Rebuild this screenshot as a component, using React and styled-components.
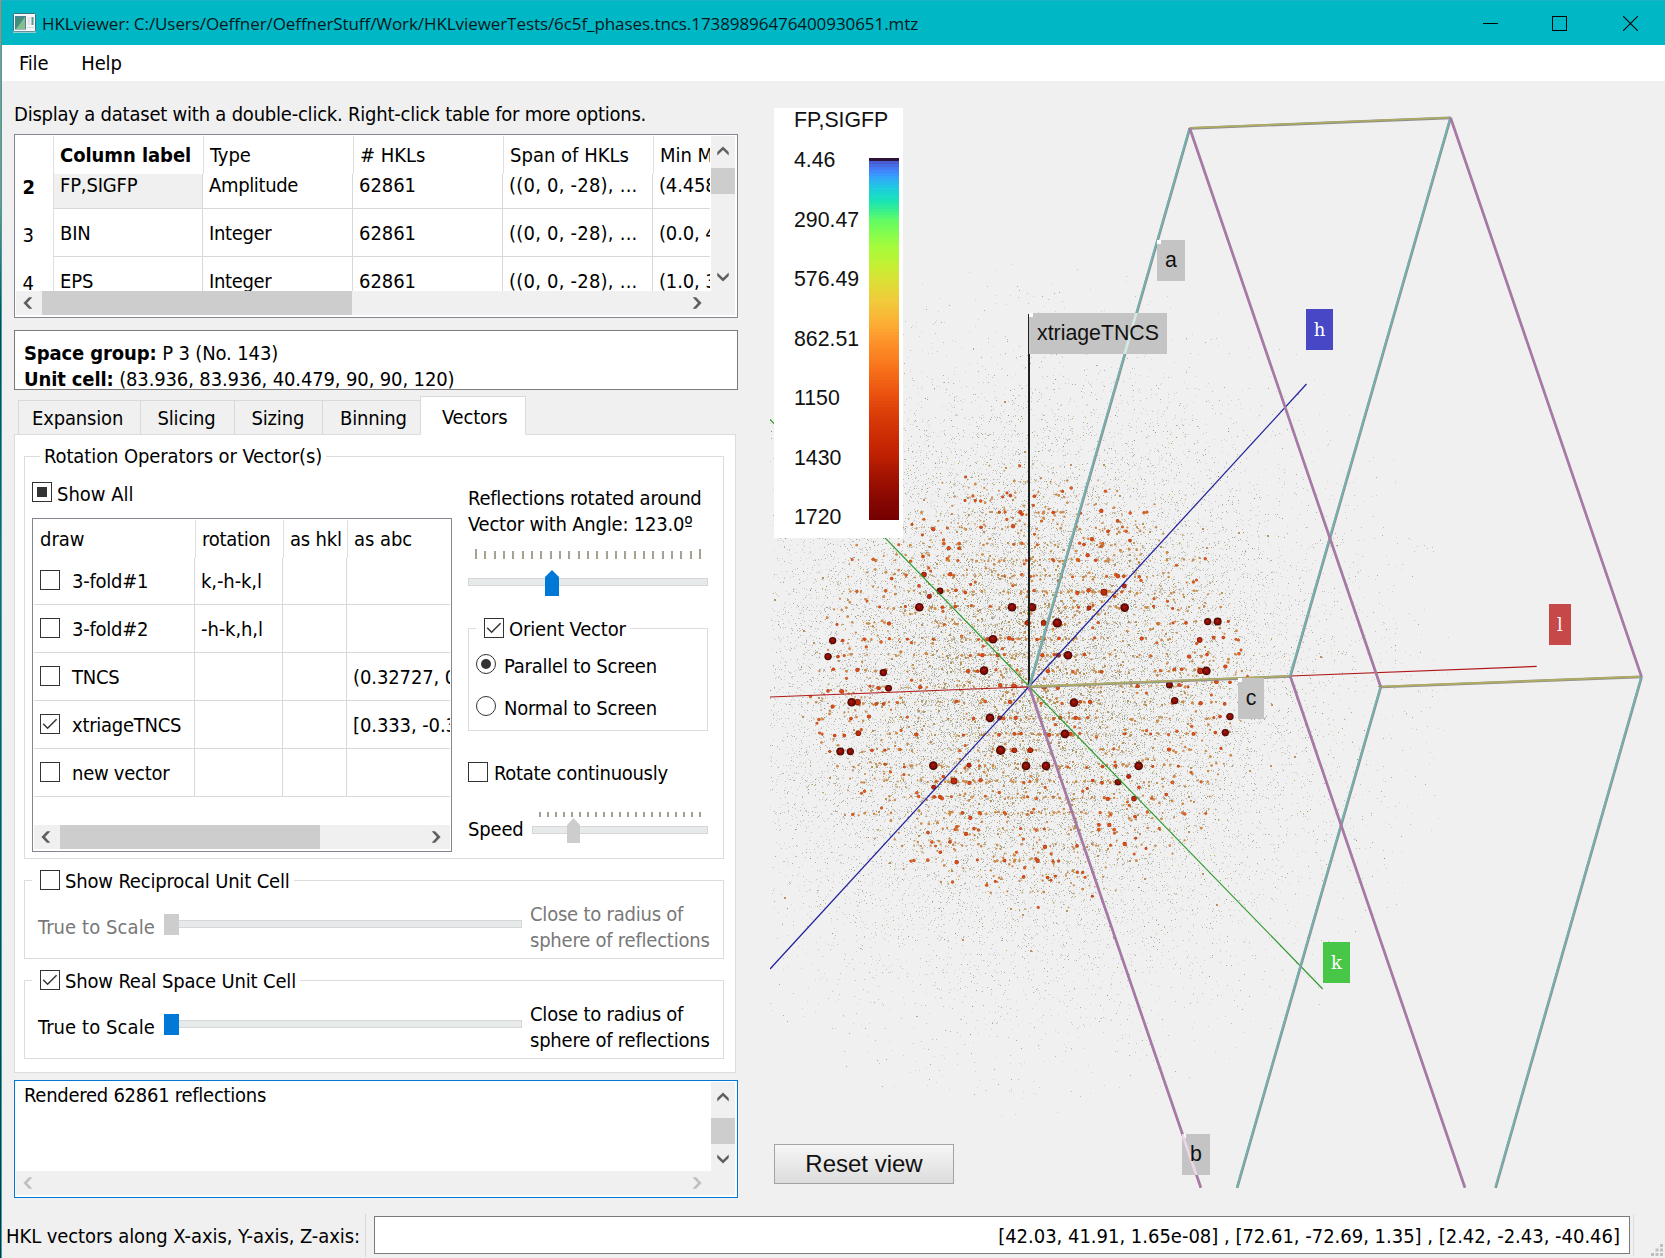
import React from "react";
import styled, { createGlobalStyle, css } from "styled-components";

const UI_FONT = '"DejaVu Sans Condensed", "DejaVu Sans", sans-serif';
const WEB_FONT = '"Liberation Sans", Arial, sans-serif';

const GlobalStyle = createGlobalStyle`
  *, *::before, *::after { box-sizing: border-box; }
  body { margin: 0; background: #f0f0f0; }
`;

/* ---------- window frame ---------- */

const Desktop = styled.div`
  width: 1665px;
  height: 1258px;
  padding-left: 1px;
  background: linear-gradient(#b58a6c 0, #a98468 200px, #1c3a44 330px, #4a5a60 560px, #16282e 1258px);
  overflow: hidden;
`;

const Window = styled.div`
  height: 100%;
  display: flex;
  flex-direction: column;
  border-left: 1px solid #12b0bf;
  background: #f0f0f0;
  color: #000;
  font: 20px/24px ${UI_FONT};
  letter-spacing: -0.17px;
  white-space: nowrap;
`;

const TitleBar = styled.header`
  height: 45px;
  flex: none;
  display: flex;
  align-items: center;
  padding: 0 27px 0 11px;
  border-top: 1px solid #1bb4c6;
  background: #00b7c6;
`;

const Title = styled.h1`
  flex: 1;
  margin: 2px 0 0 6px;
  font: 400 17px/24px "Open Sans", "Noto Sans", sans-serif;
  letter-spacing: -0.075px;
  color: #06181a;
`;

const WindowControls = styled.div`
  display: grid;
  grid-template-columns: 69px 71px 15px;
`;

const MenuBar = styled.nav`
  height: 36px;
  flex: none;
  display: flex;
  gap: 33px;
  padding: 6px 0 0 17px;
  background: #fff;
`;

const Main = styled.main`
  flex: 1;
  min-height: 0;
  display: flex;
  gap: 32px;
`;

const Controls = styled.section`
  width: 736px;
  flex: none;
  padding: 21px 0 0 12px;
  display: flex;
  flex-direction: column;
`;

const Hint = styled.p`
  margin: 0 0 8px;
  letter-spacing: -0.22px;
`;

/* ---------- scroll bars ---------- */

const Bar = styled.div`
  flex: none;
  display: flex;
  flex-direction: ${(p) => (p.$vertical ? "column" : "row")};
  ${(p) => (p.$vertical ? "width: 24px;" : "height: 24px;")}
  background: #f0f0f0;
`;

const BarButton = styled.span`
  flex: none;
  display: flex;
  align-items: center;
  justify-content: center;
  ${(p) => (p.$vertical ? "height: 29px;" : "width: 26px; padding-right: 2px;")}
`;

const BarTrack = styled.div`
  flex: 1;
  ${(p) => (p.$vertical ? `padding-top: ${p.$start}px;` : `padding-left: ${p.$start}px;`)}
`;

const BarThumb = styled.div`
  background: #cdcdcd;
  ${(p) => (p.$vertical ? `height: ${p.$size}px; width: 100%;` : `width: ${p.$size}px; height: 100%;`)}
`;

const Corner = styled.div`
  background: #f0f0f0;
`;

const arrows = {
  up: "M0.3 9.4V5.9L6 0.4L11.7 5.9V9.4L6 4.1Z",
  down: "M0.3 0.6V4.1L6 9.6L11.7 4.1V0.6L6 5.9Z",
  left: "M9.4 0.3H5.9L0.4 6L5.9 11.7H9.4L4.1 6Z",
  right: "M0.6 0.3H4.1L9.6 6L4.1 11.7H0.6L5.9 6Z",
};

function Arrow({ dir, muted }) {
  const vertical = dir === "up" || dir === "down";
  return (
    <svg width={vertical ? 12 : 10} height={vertical ? 10 : 12}>
      <path d={arrows[dir]} fill={muted ? "#bfbfbf" : "#5f5f5f"} />
    </svg>
  );
}

function ScrollBar({ vertical, start = 0, size, muted }) {
  return (
    <Bar $vertical={vertical}>
      <BarButton $vertical={vertical}><Arrow dir={vertical ? "up" : "left"} muted={muted} /></BarButton>
      <BarTrack $vertical={vertical} $start={start}>
        {size ? <BarThumb $vertical={vertical} $size={size} /> : null}
      </BarTrack>
      <BarButton $vertical={vertical}><Arrow dir={vertical ? "down" : "right"} muted={muted} /></BarButton>
    </Bar>
  );
}

/* ---------- frames and tables ---------- */

const Frame = styled.div`
  flex: none;
  border: 1px solid ${(p) => p.$border || "#828790"};
  background: #fff;
  height: ${(p) => p.$height}px;
  overflow: hidden;
`;

const ScrollGrid = styled.div`
  display: grid;
  grid-template-columns: 695px 24px;
  grid-template-rows: ${(p) => p.$view}px 24px;
  padding: 1px;
`;

const Viewport = styled.div`
  overflow: hidden;
  margin-right: 1px;
`;

const HeaderRow = styled.div`
  display: grid;
  grid-template-columns: ${(p) => p.$columns};
  height: 38px;
`;

const HeaderCell = styled.div`
  padding: 7px 0 0 6px;
  border-right: ${(p) => (p.$open ? "none" : "1px solid #e0e0e0")};
  font-weight: ${(p) => (p.$bold ? 700 : 400)};
  letter-spacing: ${(p) => p.$ls || "-0.05px"};
  overflow: hidden;
`;

const BodyRow = styled.div`
  display: grid;
  grid-template-columns: ${(p) => p.$columns};
  height: ${(p) => p.$height || 48}px;
`;

const cellBase = css`
  display: flex;
  align-items: flex-end;
  overflow: hidden;
`;

const Cell = styled.div`
  ${cellBase}
  padding: 0 0 11px 6px;
  border-right: ${(p) => (p.$open ? "none" : "1px solid #d8d8d8")};
  border-bottom: 1px solid #d8d8d8;
  background: ${(p) => (p.$current ? "#f0f0f0" : "#fff")};
  letter-spacing: ${(p) => p.$ls || "-0.1px"};
`;

const RowNumber = styled.div`
  ${cellBase}
  padding: 0 0 10px 6.5px;
  border-right: 1px solid #e0e0e0;
  font-weight: ${(p) => (p.$bold ? 700 : 400)};
`;

const InfoBox = styled(Frame)`
  margin-top: 12px;
  padding: 9px 0 0 9px;
  line-height: 26px;
  letter-spacing: -0.13px;
`;

/* ---------- tabs ---------- */

const Tabs = styled.div`
  flex: none;
  display: flex;
  align-items: flex-end;
  height: 39px;
  margin: 6px 0 -1px 4px;
`;

const Tab = styled.div`
  width: ${(p) => p.$width}px;
  height: ${(p) => (p.$active ? 39 : 35)}px;
  padding: ${(p) => (p.$active ? 8 : 5)}px 0 0 ${(p) => p.$pad}px;
  border: 1px solid #d9d9d9;
  border-right-width: ${(p) => (p.$active ? 1 : 0)}px;
  ${(p) => p.$active && "border-bottom-color: #fff; z-index: 1;"}
  background: ${(p) => (p.$active ? "#fff" : "#f0f0f0")};
`;

const Pane = styled.div`
  width: 722px;
  height: 639px;
  flex: none;
  padding: 21px 11px 0 9px;
  border: 1px solid #dcdcdc;
  background: #fff;
`;

const Group = styled.fieldset`
  display: block;
  margin: 0 0 ${(p) => p.$gap || 0}px;
  padding: 0;
  min-width: 0;
  height: ${(p) => p.$height}px;
  border: 1px solid #dcdcdc;
`;

const GroupTitle = styled.div`
  width: fit-content;
  margin: -13px 0 0 ${(p) => p.$left}px;
  padding: 0 4px 0 ${(p) => p.$pad}px;
  background: #fff;
  letter-spacing: ${(p) => p.$ls || "-0.17px"};
`;

const Columns = styled.div`
  display: flex;
  gap: 16px;
  padding-left: 7px;
`;

const OperatorsColumn = styled.div`
  width: 420px;
  padding-top: 12px;
`;

const OperatorsTable = styled(Frame)`
  margin-top: 14px;
  padding: 1px 1px 0;
`;

const OperatorsBody = styled.div`
  height: 305px;
`;

const RotationColumn = styled.div`
  width: 240px;
  padding-top: 17px;
`;

const SpacedSlider = styled.div`
  padding: 12px 0 32px;
`;

const RadioList = styled.div`
  display: flex;
  flex-direction: column;
  gap: 18px;
  padding: 12px 0 0 7px;
`;

/* ---------- check boxes, radios, sliders ---------- */

const Option = styled.label`
  display: flex;
  height: 24px;
  margin-top: ${(p) => p.$top || 0}px;
`;

const OptionText = styled.span`
  margin: ${(p) => p.$drop || 1}px 0 0 ${(p) => p.$left || 5}px;
  letter-spacing: ${(p) => p.$ls || "-0.17px"};
`;

const Box = styled.span`
  flex: none;
  display: flex;
  align-items: center;
  justify-content: center;
  width: 20px;
  height: 20px;
  margin-top: 2px;
  border: 1px solid #333;
  background: #fff;
`;

const Partial = styled.span`
  width: 10px;
  height: 10px;
  background: #333;
`;

const Radio = styled(Box)`
  border-radius: 50%;
`;

const RadioDot = styled(Partial)`
  border-radius: 50%;
`;

const TableCheck = styled.span`
  display: flex;
  margin: 0 12px 0 0;
  align-self: flex-end;
  padding-bottom: 3px;
`;

function CheckBox({ state }) {
  return (
    <Box>
      {state === "on" && (
        <svg width="16" height="12" viewBox="0 0 16 12">
          <path d="M1.2 5.8L5.6 10.2L14.6 1.2" fill="none" stroke="#333" strokeWidth="1.5" />
        </svg>
      )}
      {state === "partial" && <Partial />}
    </Box>
  );
}

const Paragraph = styled.p`
  margin: 0;
  line-height: 26px;
  letter-spacing: ${(p) => p.$ls};
`;

const SliderBox = styled.div`
  width: ${(p) => p.$width}px;
`;

const Ticks = styled.div`
  display: flex;
  justify-content: space-between;
  align-items: flex-end;
  height: ${(p) => p.$height}px;
  margin: 0 7px;
`;

const Tick = styled.i`
  width: 2px;
  height: ${(p) => p.$height}px;
  background: #a5a193;
`;

const Rail = styled.div`
  position: relative;
  height: ${(p) => p.$height}px;
  margin-top: ${(p) => p.$top}px;
  padding-top: ${(p) => p.$groove}px;
`;

const Groove = styled.div`
  width: 100%;
  height: 8px;
  border: 1px solid #d6d6d6;
  background: #e7eaea;
`;

const Thumb = styled.div`
  position: absolute;
  top: 0;
  left: ${(p) => p.$left}px;
  width: ${(p) => p.$width}px;
  height: 100%;
  background: ${(p) => (p.$on ? "#0078d7" : "#cdcdcd")};
  ${(p) => p.$pointed && "clip-path: polygon(50% 0, 100% 7px, 100% 100%, 0 100%, 0 7px);"}
`;

function Slider({ width, count, ends, tickHeight, gap, height, left, thumb, on }) {
  return (
    <SliderBox $width={width}>
      <Ticks $height={ends}>
        {Array.from({ length: count }, (_, i) => (
          <Tick key={i} $height={i === 0 || i === count - 1 ? ends : tickHeight} />
        ))}
      </Ticks>
      <Rail $height={height} $top={gap} $groove={8}>
        <Groove />
        <Thumb $left={left} $width={thumb} $on={on} $pointed />
      </Rail>
    </SliderBox>
  );
}

const SpeedRow = styled.div`
  display: flex;
  margin-top: 28px;
`;

const SpeedLabel = styled.span`
  width: 64px;
  padding-top: 5px;
`;

const ScaleRow = styled.div`
  display: flex;
  align-items: center;
  padding: 9px 0 0 13px;
  color: ${(p) => (p.$off ? "#787878" : "#000")};
`;

const ScaleLabel = styled.span`
  width: 126px;
  letter-spacing: 0.08px;
`;

const ScaleRail = styled(Rail)`
  width: 358px;
  margin: 0 8px 5px 0;
`;

function UnitCellGroup({ title, on, gap }) {
  return (
    <Group $height={79} $gap={gap}>
      <GroupTitle $left={7} $pad={8}>
        <Option>
          <CheckBox state={on ? "on" : "off"} />
          <OptionText>{title}</OptionText>
        </Option>
      </GroupTitle>
      <ScaleRow $off={!on}>
        <ScaleLabel>True to Scale</ScaleLabel>
        <ScaleRail $height={21} $top={0} $groove={6}>
          <Groove />
          <Thumb $left={0} $width={15} $on={on} />
        </ScaleRail>
        <Paragraph $ls="-0.22px">Close to radius of<br />sphere of reflections</Paragraph>
      </ScaleRow>
    </Group>
  );
}

/* ---------- log and status ---------- */

const Log = styled(Frame)`
  margin-top: 7px;
`;

const LogText = styled.div`
  padding: 1px 0 0 8px;
  letter-spacing: -0.26px;
`;

const StatusBar = styled.footer`
  height: 50px;
  flex: none;
  display: flex;
  padding-left: 4px;
`;

const StatusLabel = styled.span`
  width: 360px;
  height: 43px;
  margin-top: 6px;
  padding-top: 10px;
  border-right: 1px solid #d7d7d7;
  letter-spacing: -0.08px;
`;

const StatusField = styled.div`
  width: 1256px;
  height: 38px;
  margin: 8px 0 0 8px;
  padding: 7px 9px 0 0;
  border: 1px solid #7a7a7a;
  background: #fff;
  text-align: right;
  letter-spacing: -0.01px;
`;

const GripCell = styled.div`
  flex: 1;
  display: flex;
  align-items: flex-end;
  justify-content: flex-end;
  margin: 6px 2px 2px 3px;
  border-left: 1px solid #dedede;
`;

/* ---------- 3D scene ---------- */

const Scene = styled.section`
  position: relative;
  width: 895px;
  height: 1127px;
`;

const Legend = styled.div`
  position: absolute;
  left: 4px;
  top: 27px;
  width: 129px;
  height: 430px;
  padding: 0 4px 0 20px;
  background: #fff;
  font: 21.3px/24px ${WEB_FONT};
  letter-spacing: 0;
  color: #111;
`;

const LegendScale = styled.div`
  display: flex;
  justify-content: space-between;
  padding-top: 16px;
`;

const LegendValues = styled.div`
  display: flex;
  flex-direction: column;
  gap: 35.5px;
`;

const ColourBar = styled.div`
  width: 30px;
  height: 362px;
  margin-top: 10px;
  background: ${(p) => p.$stops};
`;

const ResetButton = styled.button`
  position: absolute;
  left: 4px;
  top: 1063px;
  width: 180px;
  height: 40px;
  padding: 0;
  border: 1px solid #a3a3a3;
  background: linear-gradient(#f6f6f6, #dcdcdc);
  font: 24px/36px ${WEB_FONT};
  color: #111;
`;

const turbo = [
  [0.008, 72, 92, 208], [0.03, 66, 130, 252], [0.05, 50, 165, 248], [0.08, 28, 205, 222], [0.115, 26, 228, 182],
  [0.145, 62, 242, 135], [0.17, 100, 252, 98], [0.24, 164, 252, 59], [0.3, 200, 238, 50], [0.345, 224, 220, 55],
  [0.39, 240, 203, 58], [0.45, 252, 176, 52], [0.5, 254, 148, 43], [0.57, 248, 118, 28], [0.64, 237, 85, 16],
  [0.7, 220, 62, 8], [0.76, 206, 45, 4], [0.82, 190, 32, 2], [0.88, 160, 18, 1], [0.94, 136, 8, 2], [1, 115, 0, 2],
];

function colourAt(t) {
  let i = 1;
  while (i < turbo.length - 1 && turbo[i][0] < t) i += 1;
  const [a, b] = [turbo[i - 1], turbo[i]];
  const k = Math.max(0, Math.min(1, (t - a[0]) / (b[0] - a[0])));
  return `rgb(${[1, 2, 3].map((c) => Math.round(a[c] + (b[c] - a[c]) * k)).join(",")})`;
}

const barStops = `linear-gradient(#2d1238 0 3px, ${Array.from({ length: 120 }, (_, i) => {
  const y = 3 + i * 3;
  return `${colourAt(y / 362)} ${y}px ${y + 3}px`;
}).join(", ")})`;

const legendValues = ["4.46", "290.47", "576.49", "862.51", "1150", "1430", "1720"];

const CX = 1029;
const CY = 686.6;
const ROW = 15.83;

function randomSource(seed) {
  let s = seed;
  return () => {
    s = (s + 0x6d2b79f5) | 0;
    let t = Math.imul(s ^ (s >>> 15), 1 | s);
    t = (t + Math.imul(t ^ (t >>> 7), 61 | t)) ^ t;
    return ((t ^ (t >>> 14)) >>> 0) / 4294967296;
  };
}

function speckle(seed, count, sigma, size, snap) {
  const rnd = randomSource(seed);
  let d = "";
  for (let i = 0; i < count; i += 1) {
    const r = sigma * Math.sqrt(-2 * Math.log(1 - rnd()));
    const a = rnd() * Math.PI * 2;
    const x = r * Math.cos(a);
    let y = r * Math.sin(a);
    if (rnd() < snap) y = Math.round(y / ROW) * ROW + (rnd() - 0.5) * 6;
    const px = Math.round(CX + x);
    const py = Math.round(CY + y);
    if (px >= 770 && r < 430) d += `M${px} ${py}h${size}v${size}h-${size}z`;
  }
  return d;
}

const speckles = [
  ["#d3d3d1", speckle(11, 16000, 142, 1, 0.05)],
  ["#c2c2bc", speckle(12, 10500, 134, 1, 0.1)],
  ["#aeae98", speckle(13, 7200, 122, 1, 0.15)],
  ["#94946f", speckle(14, 1300, 105, 1, 0.25)],
  ["#cfa53c", speckle(15, 800, 96, 1, 0.3)],
  ["#b8935c", speckle(16, 420, 96, 2, 0.3)],
];

/* reflections come in pairs related by inversion through the origin */
const smallSpheres = (() => {
  const rnd = randomSource(77);
  const out = [];
  while (out.length < 1800) {
    const x = (rnd() * 2 - 1) * 222;
    let y = -rnd() * 222;
    const r = Math.hypot(x, y);
    if (r > 222 || rnd() < Math.max(0, (r - 165) / 75)) continue;
    if (Math.abs(Math.abs(x) - 105) < 30 && y > -60 && rnd() < 0.6) continue;
    if (rnd() < (r < 150 ? 0.65 : 0.35)) y = Math.round(y / ROW) * ROW + (rnd() - 0.5) * 2.5;
    const size = 0.85 + rnd() * rnd() * 1.1;
    out.push([CX + x, CY + y, size], [CX - x, CY - y, size]);
  }
  return out;
})();

/* offsets from the centre in thirds of a pixel, with radius; each has an inverse mate */
const largeSpheres = [
  [-329, -238, 13], [-51, -238, 13], [9, -238, 13], [287, -237, 13], [85, -191, 14], [-108, -142, 13], [117, -94, 13],
  [-135, -48, 13], [532, -47, 13], [-589, -138, 11], [-603, -90, 11], [-437, -42, 11], [-421, 5, 10], [-267, -287, 10],
  [536, -195, 11], [566, -195, 12],
];

const mediumSpheres = [
  [225, -283, 10], [-315, -336, 8], [-236, -337, 6], [-299, -270, 7], [512, -140, 8], [-4, -191, 8], [44, -191, 8],
  [-94, -94, 6], [180, -236, 7], [286, -302, 7], [422, -5, 9], [267, -331, 6], [284, -331, 5], [176, -394, 6],
  [165, -426, 5], [189, -442, 6], [303, -438, 5], [237, -466, 5], [217, -527, 6], [266, -497, 5], [-287, -472, 6],
  [-48, -481, 6], [-241, -415, 6], [-210, -415, 5], [-26, -523, 6], [-21, -517, 5], [73, -522, 5], [101, -585, 4],
  [-56, -573, 5], [-66, -581, 4], [-79, -569, 4], [16, -571, 5], [-144, -478, 5], [-320, -455, 4], [-351, -486, 4],
  [-190, -629, 4], [-161, -558, 4], [-192, -558, 4], [-89, -523, 4], [155, -520, 4], [-318, -390, 5], [-412, -324, 5],
  [-330, -302, 5], [-219, -289, 5], [-191, -282, 5], [-175, -306, 4], [145, -281, 6], [179, -289, 6], [257, -270, 5],
  [200, -379, 5], [-221, -240, 5], [-260, -238, 5], [-371, -240, 4], [-448, -239, 4], [374, -241, 4], [431, -234, 4],
  [598, -195, 4], [471, -191, 5], [432, -191, 4], [-420, -189, 6], [-576, -186, 4], [-559, -138, 5], [-493, -142, 5],
  [-365, -142, 4], [-287, -142, 4], [-124, -142, 6], [-60, -145, 6], [-49, -142, 5], [24, -141, 5], [44, -142, 5],
  [90, -145, 5], [197, -146, 4], [338, -144, 6], [554, -147, 5], [583, -147, 5], [-140, -94, 6], [40, -94, 6],
  [76, -96, 5], [88, -94, 7], [166, -96, 5], [534, -96, 5], [480, -90, 6], [-573, -90, 5], [-587, -52, 5],
  [-515, -50, 6], [-183, -46, 6], [-154, -46, 5], [57, -46, 6], [218, -44, 5], [436, -52, 5], [458, -52, 5],
  [514, -47, 9], [589, -60, 6], [-477, -1, 4], [-450, 5, 5], [-325, 2, 5], [-561, 15, 6], [-603, 13, 5], [-41, -1, 5],
  [44, 2, 6], [86, 4, 6], [327, -1, 5], [453, -4, 5], [563, -14, 6],
];

const mated = (list) => list.flatMap(([x, y, r]) => [[x, y, r], [-x, -y, r]]);

function Sphere({ x, y, r, fill, edge }) {
  return (
    <>
      <circle cx={x} cy={y} r={r} fill={edge} />
      <circle cx={x} cy={y} r={r * 0.7} fill={fill} />
      {r > 2.8 && <circle cx={x - r * 0.1} cy={y - r * 0.15} r={r * 0.3} fill="#b8301c" opacity="0.45" />}
    </>
  );
}

const cellEdges = [
  ["#b0ad5e", [[1189.5, 128, 1450.3, 117.5], [1380.5, 686.7, 1641.3, 676.6], [1029, 686.7, 1290, 676]]],
  ["#6fb5b3", [[1029, 686.7, 1189.5, 128], [1290, 676, 1450.3, 117.5], [1380.5, 686.7, 1236.8, 1187.5], [1641.3, 676.6, 1495.3, 1187.5]]],
  ["#b56fb3", [[1189.5, 128, 1380.5, 686.7], [1450.3, 117.5, 1641.3, 676.6], [1029, 686.7, 1200.6, 1187.5], [1290, 676, 1464.7, 1187.5]]],
];

const greyTags = [
  ["a", 1157, 240, 28], ["xtriageTNCS", 1029, 313, 138], ["c", 1238, 678, 26], ["b", 1182, 1134, 28],
];

const axisTags = [
  ["h", 1306, 309, 27, "#4848c6"], ["l", 1549, 604, 22, "#c64848"], ["k", 1323, 942, 27, "#48c648"],
];

function SceneDrawing() {
  return (
    <svg width="895" height="1127" viewBox="770 81 895 1127">
      <defs>
        <clipPath id="tags">
          {greyTags.filter((t) => t[0] !== "a" && t[0] !== "c").map(([t, x, y, w]) => (
            <rect key={t} x={x} y={y} width={w} height="41" />
          ))}
        </clipPath>
      </defs>
      <g shapeRendering="crispEdges">
        {speckles.map(([fill, d]) => <path key={fill} d={d} fill={fill} />)}
      </g>
      {smallSpheres.map(([x, y, r], i) => (
        r < 1.25
          ? <circle key={i} cx={x} cy={y} r={r} fill={r < 1 ? "#c4a06c" : "#c88a4c"} />
          : <Sphere key={i} x={x} y={y} r={r} fill={r > 1.45 ? "#ea5a16" : "#e08a3a"} edge={r > 1.45 ? "#b4592c" : "#b8834a"} />
      ))}
      {mated(mediumSpheres).map(([x, y, r], i) => (
        <Sphere key={i} x={CX + x / 3} y={CY + y / 3} r={r / 3 + 0.15} fill={r > 6 ? "#c42a08" : "#e64a10"} edge={r > 6 ? "#84200e" : "#a84420"} />
      ))}
      {mated(largeSpheres).map(([x, y, r], i) => (
        <Sphere key={i} x={CX + x / 3} y={CY + y / 3} r={r / 3} fill="#8c0c04" edge="#4c0a06" />
      ))}

      <line x1="1029" y1="314" x2="1029" y2="686.6" stroke="#1e221e" strokeWidth="2" />
      <line x1="770" y1="697" x2="1029" y2="686.8" stroke="#b01818" strokeWidth="1.2" />
      <line x1="1290" y1="676" x2="1536.7" y2="666.4" stroke="#b01818" strokeWidth="1.2" />
      <line x1="770" y1="969" x2="1306.5" y2="384" stroke="#20209a" strokeWidth="1.2" />
      <line x1="770" y1="419.3" x2="1322.7" y2="989" stroke="#2f9a2f" strokeWidth="1.2" />
      {cellEdges.map(([colour, lines]) => lines.map(([x1, y1, x2, y2]) => (
        <g key={`${x1}-${x2}`}>
          <line x1={x1 + 0.3} y1={y1 + 0.3} x2={x2 + 0.3} y2={y2 + 0.3} stroke="#8d8d8d" strokeWidth="2.7" />
          <line x1={x1} y1={y1} x2={x2} y2={y2} stroke={colour} strokeWidth="1.7" />
        </g>
      )))}

      {greyTags.map(([t, x, y, w]) => (
        <g key={t}>
          <rect x={x} y={y} width={w} height="41" fill="#c4c4c4" />
          <rect x={x} y={y} width="4" height="4" fill="#fff" />
        </g>
      ))}
      <g clipPath="url(#tags)" strokeWidth="2.6">
        <line x1="1029" y1="686.7" x2="1189.5" y2="128" stroke="#d4e8e6" />
        <line x1="1029" y1="686.7" x2="1200.6" y2="1187.5" stroke="#ecd6ea" />
      </g>
      <g fontFamily={WEB_FONT} fontSize="21.3" letterSpacing="0" fill="#111" textAnchor="middle">
        {greyTags.map(([t, x, y, w]) => <text key={t} x={x + w / 2} y={y + 26.7}>{t}</text>)}
      </g>
      {axisTags.map(([t, x, y, w, fill]) => (
        <g key={t}>
          <rect x={x} y={y} width={w} height="41" fill={fill} />
          <text x={x + w / 2} y={y + 27} fontFamily='"DejaVu Serif", serif' fontSize="18" letterSpacing="0" fill="#fff" textAnchor="middle">{t}</text>
        </g>
      ))}
    </svg>
  );
}

/* ---------- data ---------- */

const datasetHead = "38px 150px 150px 150px 150px 1fr";
const datasetBody = "38px 149px 150px 150px 150px 1fr";
const datasetSpacing = ["-0.17px", "-0.35px", "-0.05px", "0.22px", "-0.15px"];
const datasets = [
  ["2", "FP,SIGFP", "Amplitude", "62861", "((0, 0, -28), ...", "(4.458, 1719.2)"],
  ["3", "BIN", "Integer", "62861", "((0, 0, -28), ...", "(0.0, 49.0)"],
  ["4", "EPS", "Integer", "62861", "((0, 0, -28), ...", "(1.0, 3.0)"],
];

const vectorHead = "162px 88px 64px 1fr";
const vectorBody = "161px 88px 64px 1fr";
const vectors = [
  ["3-fold#1", "k,-h-k,l", "", ""],
  ["3-fold#2", "-h-k,h,l", "", ""],
  ["TNCS", "", "", "(0.32727, 0.33"],
  ["xtriageTNCS", "", "", "[0.333, -0.333"],
  ["new vector", "", "", ""],
];

const tabs = [["Expansion", 122, 13], ["Slicing", 94, 16.5], ["Sizing", 88, 16.5], ["Binning", 98, 17], ["Vectors", 106, 21]];

export default function App() {
  return (
    <Desktop>
      <GlobalStyle />
      <Window>
        <TitleBar>
          <svg width="23" height="20" viewBox="0 0 23 20">
            <rect x="0.5" y="0.5" width="22" height="18" rx="1" fill="#f4f6f6" stroke="#3c6f7c" />
            <rect x="2.5" y="3.5" width="10" height="12.5" fill="#3f8f7c" stroke="#4d7fa0" />
            <path d="M3 16L12 4V16Z" fill="#86bd8e" />
            <rect x="14.5" y="4" width="3" height="8" fill="#e2e6e6" />
            <rect x="18.5" y="4" width="2" height="8" fill="#5a9a8a" />
            <path d="M14 14.5H21M0 19.2H23" stroke="#d4dada" />
          </svg>
          <Title>HKLviewer: C:/Users/Oeffner/OeffnerStuff/Work/HKLviewerTests/6c5f_phases.tncs.17389896476400930651.mtz</Title>
          <WindowControls>
            <svg width="15" height="15"><path d="M0 7.5H15" stroke="#000" /></svg>
            <svg width="15" height="15"><rect x="0.5" y="0.5" width="14" height="14" fill="none" stroke="#000" /></svg>
            <svg width="15" height="15"><path d="M0.2 0.2L14.8 14.8M14.8 0.2L0.2 14.8" stroke="#000" strokeWidth="1.1" /></svg>
          </WindowControls>
        </TitleBar>
        <MenuBar><span>File</span><span>Help</span></MenuBar>

        <Main>
          <Controls>
            <Hint>Display a dataset with a double-click. Right-click table for more options.</Hint>
            <Frame $height={184}>
              <ScrollGrid $view={155}>
                <Viewport>
                  <HeaderRow $columns={datasetHead}>
                    <HeaderCell />
                    <HeaderCell $bold $ls="-0.06px">Column label</HeaderCell>
                    <HeaderCell>Type</HeaderCell>
                    <HeaderCell>{"# HKLs"}</HeaderCell>
                    <HeaderCell $ls="0.02px">Span of HKLs</HeaderCell>
                    <HeaderCell $open>Min Max</HeaderCell>
                  </HeaderRow>
                  {datasets.map(([n, ...cells], i) => (
                    <BodyRow key={n} $columns={datasetBody} $height={i === 0 ? 35 : 48}>
                      <RowNumber $bold={i === 0}>{n}</RowNumber>
                      {cells.map((c, j) => (
                        <Cell key={j} $current={i === 0 && j === 0} $open={j === 4} $ls={datasetSpacing[j]}>{c}</Cell>
                      ))}
                    </BodyRow>
                  ))}
                </Viewport>
                <ScrollBar vertical start={3} size={26} />
                <ScrollBar size={310} />
                <Corner />
              </ScrollGrid>
            </Frame>

            <InfoBox $height={60} $border="#7a7a7a">
              <b>Space group:</b> P 3 (No. 143)<br />
              <b>Unit cell:</b> (83.936, 83.936, 40.479, 90, 90, 120)
            </InfoBox>

            <Tabs>
              {tabs.map(([name, width, pad]) => (
                <Tab key={name} $width={width} $pad={pad} $active={name === "Vectors"}>{name}</Tab>
              ))}
            </Tabs>
            <Pane>
              <Group $height={403} $gap={21}>
                <GroupTitle $left={15} $pad={4} $ls="-0.1px">Rotation Operators or Vector(s)</GroupTitle>
                <Columns>
                  <OperatorsColumn>
                    <Option>
                      <CheckBox state="partial" />
                      <OptionText $drop={2} $ls="0">Show All</OptionText>
                    </Option>
                    <OperatorsTable $height={334}>
                      <OperatorsBody>
                        <HeaderRow $columns={vectorHead}>
                          <HeaderCell>draw</HeaderCell>
                          <HeaderCell $ls="-0.25px">rotation</HeaderCell>
                          <HeaderCell $ls="-0.2px">as hkl</HeaderCell>
                          <HeaderCell $open>as abc</HeaderCell>
                        </HeaderRow>
                        {vectors.map(([name, ...cells], i) => (
                          <BodyRow key={name} $columns={vectorBody} $height={i === 0 ? 47 : 48}>
                            <Cell $ls="-0.26px">
                              <TableCheck><CheckBox state={name === "xtriageTNCS" ? "on" : "off"} /></TableCheck>
                              {name}
                            </Cell>
                            {cells.map((c, j) => <Cell key={j} $open={j === 2}>{c}</Cell>)}
                          </BodyRow>
                        ))}
                      </OperatorsBody>
                      <ScrollBar size={260} />
                    </OperatorsTable>
                  </OperatorsColumn>

                  <RotationColumn>
                    <Paragraph $ls="-0.21px">Reflections rotated around<br />Vector with Angle: 123.0º</Paragraph>
                    <SpacedSlider>
                      <Slider width={240} count={25} ends={10} tickHeight={8} gap={11} height={26} left={77} thumb={14} on />
                    </SpacedSlider>
                    <Group $height={103}>
                      <GroupTitle $left={7} $pad={8}>
                        <Option>
                          <CheckBox state="on" />
                          <OptionText>Orient Vector</OptionText>
                        </Option>
                      </GroupTitle>
                      <RadioList>
                        <Option>
                          <Radio><RadioDot /></Radio>
                          <OptionText $left={8} $drop={2} $ls="-0.22px">Parallel to Screen</OptionText>
                        </Option>
                        <Option>
                          <Radio />
                          <OptionText $left={8} $drop={2} $ls="-0.22px">Normal to Screen</OptionText>
                        </Option>
                      </RadioList>
                    </Group>
                    <Option $top={29}>
                      <CheckBox />
                      <OptionText $left={6} $ls="-0.28px">Rotate continuously</OptionText>
                    </Option>
                    <SpeedRow>
                      <SpeedLabel>Speed</SpeedLabel>
                      <Slider width={176} count={21} ends={5} tickHeight={5} gap={1} height={25} left={35} thumb={13} />
                    </SpeedRow>
                  </RotationColumn>
                </Columns>
              </Group>
              <UnitCellGroup title="Show Reciprocal Unit Cell" gap={21} />
              <UnitCellGroup title="Show Real Space Unit Cell" on />
            </Pane>

            <Log $height={118} $border="#0078d7">
              <ScrollGrid $view={89}>
                <LogText>Rendered 62861 reflections</LogText>
                <ScrollBar vertical start={7} size={26} />
                <ScrollBar muted />
                <Corner />
              </ScrollGrid>
            </Log>
          </Controls>

          <Scene>
            <SceneDrawing />
            <Legend>
              <div>FP,SIGFP</div>
              <LegendScale>
                <LegendValues>{legendValues.map((v) => <span key={v}>{v}</span>)}</LegendValues>
                <ColourBar $stops={barStops} />
              </LegendScale>
            </Legend>
            <ResetButton>Reset view</ResetButton>
          </Scene>
        </Main>

        <StatusBar>
          <StatusLabel>HKL vectors along X-axis, Y-axis, Z-axis:</StatusLabel>
          <StatusField>[42.03, 41.91, 1.65e-08] , [72.61, -72.69, 1.35] , [2.42, -2.43, -40.46]</StatusField>
          <GripCell>
            <svg width="12" height="12" fill="#bfbfbf">
              <path d="M9 0h3v3h-3zM9 4.5h3v3h-3zM9 9h3v3h-3zM4.5 4.5h3v3h-3zM4.5 9h3v3h-3zM0 9h3v3h-3z" />
            </svg>
          </GripCell>
        </StatusBar>
      </Window>
    </Desktop>
  );
}
